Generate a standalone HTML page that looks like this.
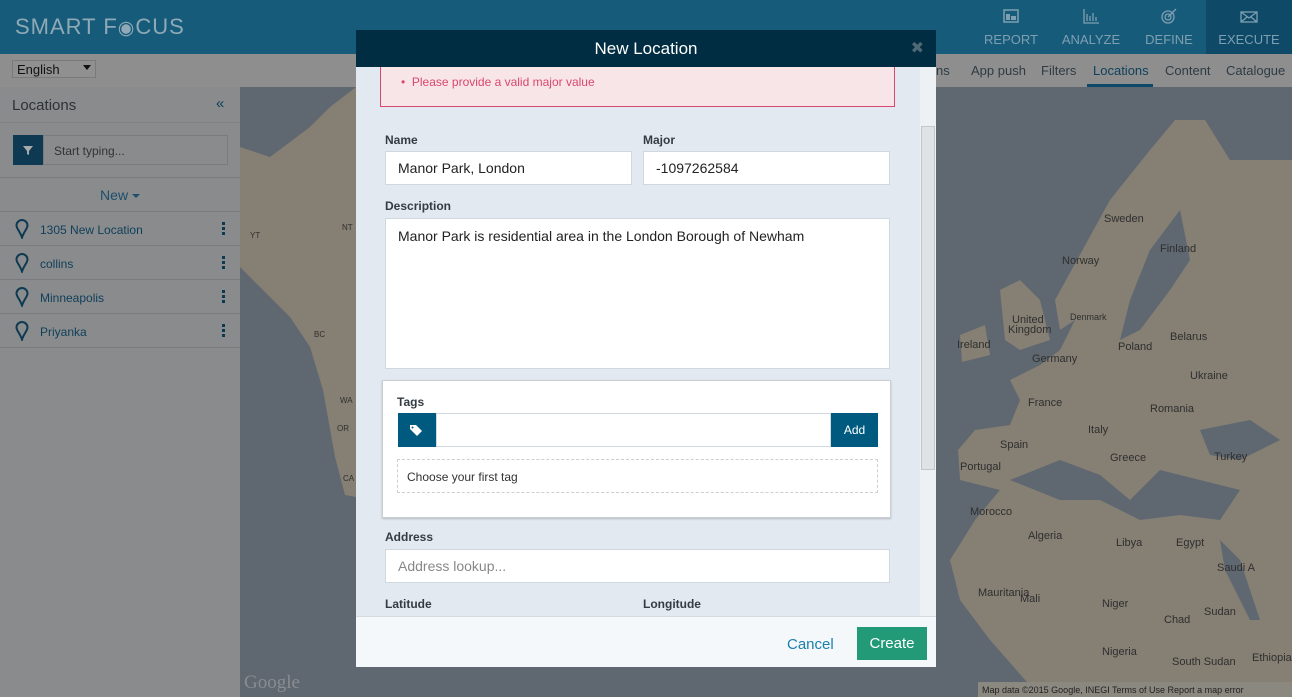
<!DOCTYPE html>
<html><head><meta charset="utf-8"><style>
*{box-sizing:border-box;margin:0;padding:0}
html,body{width:1292px;height:697px;overflow:hidden}
body{position:relative;font-family:"Liberation Sans",Arial,sans-serif;background:#5f6770}
.hdr{position:absolute;left:0;top:0;width:1292px;height:54px;background:#175b7a}
.logo{position:absolute;left:15px;top:14px;font-size:22px;letter-spacing:1px;color:#8fa9b6}
.nav{position:absolute;top:0;height:54px;width:86px;text-align:center;color:#7f9fb0;font-size:13px}
.nav .t{position:absolute;top:32px;left:0;right:0}
.sub{position:absolute;left:0;top:54px;width:1292px;height:33px;background:#8e8e8e}
.sel{position:absolute;left:12px;top:60px;width:84px;height:18px;border:1px solid #7a7a7a;background:#909090;font-size:13px;color:#111;padding:1px 4px}
.tabs{position:absolute;top:63px;font-size:13px;color:#2e3b44}
.side{position:absolute;left:0;top:87px;width:240px;height:610px;background:#8a8b8c}
.row{position:absolute;left:0;width:240px;height:34px;border-bottom:1px solid #7a7b7c;font-size:12px;color:#0e3f5a}
.modal{position:absolute;left:356px;top:30px;width:580px;height:637px;background:#e2e9f0;overflow:hidden}
.mh{height:37px;background:#002d42;color:#fff;font-size:17px;text-align:center;line-height:37px;position:relative}
.lbl{position:absolute;font-size:12px;font-weight:bold;color:#333c44}
.inp{position:absolute;background:#fff;border:1px solid #cfd7df;font-size:14px;color:#222;padding-left:12px}
</style></head><body>
<svg style="position:absolute;left:240px;top:87px" width="1052" height="610">
<rect width="1052" height="610" fill="#5f6770"/>
<path d="M30 70 L70 40 L90 20 L116 0 L116 410 L105 408 L95 370 L83 303 L70 260 L50 230 L20 200 L0 180 L0 60 Z" fill="#857f74"/>
<path d="M0 0 L25 0 L28 40 L10 55 L0 60 Z" fill="#5f6770"/>
<path d="M935 33 L965 33 L990 73 L1052 73 L1052 610 L800 610 L750 553 L720 513 L710 473 L735 433 L760 403 L720 393 L718 363 L735 343 L770 338 L780 313 L770 293 L800 278 L820 263 L835 233 L820 243 L815 213 L870 113 L910 63 Z" fill="#857f74"/>
<path d="M760 203 L780 193 L800 213 L810 253 L780 263 L765 253 Z" fill="#857f74"/>
<path d="M720 248 L745 238 L750 268 L722 275 Z" fill="#857f74"/>
<path d="M890 213 L910 163 L940 123 L950 173 L930 203 L900 243 L880 253 Z" fill="#5f6770"/>
<path d="M770 393 L820 373 L860 388 L890 413 L920 383 L960 393 L1000 403 L980 433 L940 428 L900 433 L860 413 L820 413 Z" fill="#5f6770"/>
<path d="M960 343 L1010 333 L1040 353 L1000 373 L970 368 Z" fill="#5f6770"/>
<path d="M980 453 L1000 473 L1020 533 L1010 533 L985 483 Z" fill="#5f6770"/>
<g font-size="11" fill="#2f2f2f" font-family="Liberation Sans">
<text x="10" y="151" font-size="8">YT</text><text x="102" y="143" font-size="8">NT</text><text x="74" y="250" font-size="8">BC</text><text x="100" y="316" font-size="8">WA</text><text x="97" y="344" font-size="8">OR</text><text x="103" y="394" font-size="8">CA</text>
<text x="864" y="135">Sweden</text><text x="920" y="165">Finland</text><text x="822" y="177">Norway</text><text x="830" y="233" font-size="9">Denmark</text>
<text x="772" y="236">United</text><text x="768" y="246">Kingdom</text><text x="717" y="261">Ireland</text><text x="878" y="263">Poland</text><text x="792" y="275">Germany</text><text x="930" y="253">Belarus</text><text x="950" y="292">Ukraine</text>
<text x="788" y="319">France</text><text x="910" y="325">Romania</text><text x="848" y="346">Italy</text><text x="760" y="361">Spain</text><text x="974" y="373">Turkey</text><text x="870" y="374">Greece</text><text x="720" y="383">Portugal</text>
<text x="730" y="428">Morocco</text><text x="788" y="452">Algeria</text><text x="876" y="459">Libya</text><text x="936" y="459">Egypt</text><text x="977" y="484">Saudi A</text>
<text x="738" y="509">Mauritania</text><text x="780" y="515">Mali</text><text x="862" y="520">Niger</text><text x="924" y="536">Chad</text><text x="964" y="528">Sudan</text><text x="862" y="568">Nigeria</text><text x="932" y="578">South Sudan</text><text x="1012" y="574">Ethiopia</text>
<text x="4" y="601" font-size="19" fill="#8a8d90" font-family="Liberation Serif">Google</text>
</g>
<rect x="738" y="595" width="314" height="15" fill="#8b8880"/>
<text x="742" y="606" font-size="9" fill="#222">Map data ©2015 Google, INEGI   Terms of Use   Report a map error</text>
</svg>
<div class="hdr">
<div class="logo">SMART F<span style="font-size:19px">◉</span>CUS</div>
<div class="nav" style="left:968px"><svg style="margin-top:9px" width="16" height="14"><rect x="1" y="1" width="14" height="12" fill="none" stroke="#7f9fb0" stroke-width="1.5"/><rect x="3" y="5" width="4" height="6" fill="#7f9fb0"/><rect x="8" y="7" width="5" height="4" fill="#7f9fb0"/></svg><div class="t">REPORT</div></div>
<div class="nav" style="left:1048px"><svg style="margin-top:8px" width="18" height="16"><path d="M2 1v14h15M5 13V6M8 13V8M11 13V5M14 13V9" stroke="#7f9fb0" stroke-width="1.3" fill="none"/></svg><div class="t">ANALYZE</div></div>
<div class="nav" style="left:1126px"><svg style="margin-top:8px" width="18" height="16"><circle cx="8" cy="9" r="6" fill="none" stroke="#7f9fb0" stroke-width="1.3"/><circle cx="8" cy="9" r="3" fill="none" stroke="#7f9fb0" stroke-width="1.3"/><path d="M8 9L16 1" stroke="#7f9fb0" stroke-width="1.3"/></svg><div class="t">DEFINE</div></div>
<div class="nav" style="left:1206px;width:86px;background:#0e4a68"><svg style="margin-top:11px" width="18" height="12"><rect x="1" y="1" width="16" height="10" fill="none" stroke="#7f9fb0" stroke-width="1.3"/><path d="M1 1l8 6 8-6M1 11l6-5M17 11l-6-5" stroke="#7f9fb0" stroke-width="1.2" fill="none"/></svg><div class="t">EXECUTE</div></div>
</div>
<div class="sub"></div>
<div class="sel">English<span style="position:absolute;right:4px;top:4px;border:4px solid transparent;border-top:5px solid #111"></span></div>
<div class="tabs" style="left:936px">ns</div><div class="tabs" style="left:971px">App push</div><div class="tabs" style="left:1041px">Filters</div><div class="tabs" style="left:1093px;color:#0e3f5a">Locations</div><div class="tabs" style="left:1165px">Content</div><div class="tabs" style="left:1226px">Catalogue</div>
<div style="position:absolute;left:1087px;top:84px;width:66px;height:3px;background:#0e4a68"></div>
<div class="side">
<div style="position:absolute;left:12px;top:10px;font-size:15px;color:#2b3238">Locations</div>
<div style="position:absolute;left:216px;top:8px;font-size:15px;color:#0e3f5a">«</div>
<div style="position:absolute;left:0;top:35px;width:240px;border-top:1px solid #7f8081"></div>
<div style="position:absolute;left:13px;top:48px;width:30px;height:30px;background:#0d3a52"><svg width="30" height="30"><path d="M10 11h10l-4 5v4l-2-1v-3z" fill="#aaa"/></svg></div>
<div style="position:absolute;left:43px;top:48px;width:185px;height:30px;border:1px solid #7a7b7c;font-size:12px;color:#333;padding:8px 10px">Start typing...</div>
<div style="position:absolute;left:0;top:90px;width:240px;height:35px;border-top:1px solid #7a7b7c;border-bottom:1px solid #7a7b7c;text-align:center;font-size:14px;color:#1c4f6b;line-height:34px">New <span style="display:inline-block;border:4px solid transparent;border-top:4px solid #1c4f6b;vertical-align:-2px"></span></div>
</div>
<div class="row" style="top:212px"><svg style="position:absolute;left:15px;top:7px" width="14" height="20"><path d="M7 1a5.5 5.5 0 0 0-5.5 5.5c0 3 3.5 6 5.5 12 2-6 5.5-9 5.5-12A5.5 5.5 0 0 0 7 1z" fill="none" stroke="#0d3a52" stroke-width="2"/></svg><span style="position:absolute;left:40px;top:11px">1305 New Location</span><span style="position:absolute;left:222px;top:10px;width:3px;height:13px;border-left:3px dotted #0d3a52"></span></div>
<div class="row" style="top:246px"><svg style="position:absolute;left:15px;top:7px" width="14" height="20"><path d="M7 1a5.5 5.5 0 0 0-5.5 5.5c0 3 3.5 6 5.5 12 2-6 5.5-9 5.5-12A5.5 5.5 0 0 0 7 1z" fill="none" stroke="#0d3a52" stroke-width="2"/></svg><span style="position:absolute;left:40px;top:11px">collins</span><span style="position:absolute;left:222px;top:10px;width:3px;height:13px;border-left:3px dotted #0d3a52"></span></div>
<div class="row" style="top:280px"><svg style="position:absolute;left:15px;top:7px" width="14" height="20"><path d="M7 1a5.5 5.5 0 0 0-5.5 5.5c0 3 3.5 6 5.5 12 2-6 5.5-9 5.5-12A5.5 5.5 0 0 0 7 1z" fill="none" stroke="#0d3a52" stroke-width="2"/></svg><span style="position:absolute;left:40px;top:11px">Minneapolis</span><span style="position:absolute;left:222px;top:10px;width:3px;height:13px;border-left:3px dotted #0d3a52"></span></div>
<div class="row" style="top:314px"><svg style="position:absolute;left:15px;top:7px" width="14" height="20"><path d="M7 1a5.5 5.5 0 0 0-5.5 5.5c0 3 3.5 6 5.5 12 2-6 5.5-9 5.5-12A5.5 5.5 0 0 0 7 1z" fill="none" stroke="#0d3a52" stroke-width="2"/></svg><span style="position:absolute;left:40px;top:11px">Priyanka</span><span style="position:absolute;left:222px;top:10px;width:3px;height:13px;border-left:3px dotted #0d3a52"></span></div>

<div class="modal">
<div class="mh">New Location<span style="position:absolute;right:12px;top:0;font-size:16px;color:#4f6876">✖</span></div>
<div style="position:absolute;left:24px;top:37px;width:515px;height:40px;background:#f8e5e8;border:1px solid #d9486c;border-top:none;font-size:12px;color:#d9486c;padding:8px 0 0 20px">•&nbsp; Please provide a valid major value</div>
<div class="lbl" style="left:29px;top:103px">Name</div><div class="lbl" style="left:287px;top:103px">Major</div>
<div class="inp" style="left:29px;top:121px;width:247px;height:34px;line-height:32px">Manor Park, London</div>
<div class="inp" style="left:287px;top:121px;width:247px;height:34px;line-height:32px">-1097262584</div>
<div class="lbl" style="left:29px;top:169px">Description</div>
<div class="inp" style="left:29px;top:188px;width:505px;height:151px;padding-top:9px">Manor Park is residential area in the London Borough of Newham</div>
<div style="position:absolute;left:26px;top:350px;width:509px;height:138px;background:#fff;border:1px solid #c9cfd5;box-shadow:0 1px 2px rgba(0,0,0,.2)">
<div class="lbl" style="left:14px;top:14px">Tags</div>
<div style="position:absolute;left:15px;top:32px;width:38px;height:34px;background:#005a80"><svg width="38" height="34"><path d="M12 12h6l6 6-5 5-7-7z" fill="#fff"/><circle cx="14.5" cy="14.5" r="1" fill="#005a80"/></svg></div>
<div style="position:absolute;left:53px;top:32px;width:395px;height:34px;border:1px solid #cfd7df"></div>
<div style="position:absolute;left:448px;top:32px;width:47px;height:34px;background:#005a80;color:#fff;font-size:12px;text-align:center;line-height:34px">Add</div>
<div style="position:absolute;left:14px;top:78px;width:481px;height:34px;border:1px dashed #c9cfd5;font-size:12px;color:#333;padding:10px 9px">Choose your first tag</div>
</div>
<div class="lbl" style="left:29px;top:500px">Address</div>
<div class="inp" style="left:29px;top:519px;width:505px;height:34px;line-height:32px;color:#888">Address lookup...</div>
<div class="lbl" style="left:29px;top:567px">Latitude</div><div class="lbl" style="left:287px;top:567px">Longitude</div>
<div style="position:absolute;left:564px;top:37px;width:16px;height:549px;background:#eef1f4"></div>
<div style="position:absolute;left:565px;top:96px;width:14px;height:344px;background:#dfe3e6;border:1px solid #c3c7ca"></div>
<div style="position:absolute;left:0;top:586px;width:580px;height:51px;background:#f5f8fa;border-top:1px solid #d5dbe0">
<div style="position:absolute;left:431px;top:19px;font-size:15px;color:#1a7fad">Cancel</div>
<div style="position:absolute;left:501px;top:10px;width:70px;height:33px;background:#229a78;color:#fff;font-size:15px;text-align:center;line-height:33px">Create</div>
</div>
</div>
</body></html>
